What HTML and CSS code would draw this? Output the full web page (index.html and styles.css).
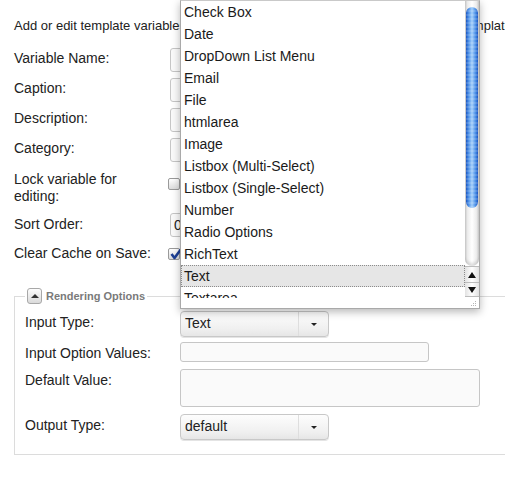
FILE: index.html
```html
<!DOCTYPE html>
<html>
<head>
<meta charset="utf-8">
<link rel="stylesheet" href="styles.css">
</head>
<body>
<div class="page">
  <p class="intro">Add or edit template variables here then associate this variable to any of your templates.</p>

  <div class="row r30">
    <label class="lbl p2">Variable Name:</label>
    <input class="field" type="text">
  </div>
  <div class="row r30">
    <label class="lbl p2">Caption:</label>
    <input class="field" type="text">
  </div>
  <div class="row r30">
    <label class="lbl p2">Description:</label>
    <input class="field" type="text">
  </div>
  <div class="row r30">
    <label class="lbl p2">Category:</label>
    <input class="field" type="text">
  </div>
  <div class="row r45">
    <label class="lbl p3">Lock variable for editing:</label>
    <span class="check mt10"></span>
  </div>
  <div class="row r30">
    <label class="lbl p3">Sort Order:</label>
    <input class="field" type="text" value="0">
  </div>
  <div class="row r30">
    <label class="lbl p2">Clear Cache on Save:</label>
    <span class="check mt5"><svg width="14" height="14" viewBox="0 0 14 14"><path d="M2.5 7 L5.5 11 L12.5 1.5" fill="none" stroke="#1d3f94" stroke-width="2.6" stroke-linejoin="round"/></svg></span>
  </div>

  <fieldset class="group">
    <legend class="legend"><span class="toggle"><span class="tri-up"></span></span><span>Rendering Options</span></legend>
    <div class="frow mb5">
      <label class="lbl p3">Input Type:</label>
      <div class="select"><span class="sel-text">Text</span><span class="sel-btn"><span class="tri-down"></span></span></div>
    </div>
    <div class="frow mb7">
      <label class="lbl p25">Input Option Values:</label>
      <input class="field small" type="text">
    </div>
    <div class="frow mb7">
      <label class="lbl p25">Default Value:</label>
      <textarea class="field area"></textarea>
    </div>
    <div class="frow">
      <label class="lbl p3">Output Type:</label>
      <div class="select"><span class="sel-text">default</span><span class="sel-btn"><span class="tri-down"></span></span></div>
    </div>
  </fieldset>

  <div class="listbox">
    <ul class="items">
      <li>Check Box</li>
      <li>Date</li>
      <li>DropDown List Menu</li>
      <li>Email</li>
      <li>File</li>
      <li>htmlarea</li>
      <li>Image</li>
      <li>Listbox (Multi-Select)</li>
      <li>Listbox (Single-Select)</li>
      <li>Number</li>
      <li>Radio Options</li>
      <li>RichText</li>
      <li class="current">Text</li>
      <li>Textarea</li>
      <li>URL</li>
    </ul>
    <div class="vscroll">
      <div class="track"><div class="thumb"></div></div>
      <div class="sbtn up"><span class="tri-up dark"></span></div>
      <div class="sbtn down"><span class="tri-down dark"></span></div>
      <div class="grip"><svg width="14" height="11" viewBox="0 0 14 11"><g fill="#b5b5b5"><rect x="10" y="4" width="1" height="1"/><rect x="8" y="6" width="1" height="1"/><rect x="10" y="6" width="1" height="1"/><rect x="6" y="8" width="1" height="1"/><rect x="8" y="8" width="1" height="1"/><rect x="10" y="8" width="1" height="1"/></g></svg></div>
    </div>
  </div>
</div>
</body>
</html>
```

FILE: styles.css
```css
html, body {
  margin: 0;
  padding: 0;
  width: 505px;
  height: 481px;
  overflow: hidden;
  background: #fff;
}

body {
  font-family: "Liberation Sans", Arial, Helvetica, sans-serif;
  color: #222;
}

.page {
  position: relative;
  padding: 18px 0 0 14px;
  height: 463px;
}

.intro {
  margin: 0 0 14px 0;
  font-size: 13px;
  line-height: 16px;
  white-space: nowrap;
}

.row {
  display: grid;
  grid-template-columns: 156px 1fr;
  align-items: start;
}

.r30 { height: 30px; }
.r45 { height: 45px; }

.lbl {
  font-size: 14px;
  line-height: 17px;
  max-width: 142px;
}

.p2 { padding-top: 2px; }
.p25 { padding-top: 3px; }
.p3 { padding-top: 3px; }

.field {
  box-sizing: border-box;
  height: 24px;
  width: 300px;
  margin: 0;
  border: 1px solid #c6c6c6;
  border-radius: 3px;
  background: #fafafa;
  font: 14px "Liberation Sans", Arial, sans-serif;
  color: #222;
  padding: 0 3px;
}

.field.small {
  height: 20px;
  width: 249px;
}

.field.area {
  height: 38px;
  width: 300px;
  resize: none;
  display: block;
}

.check {
  box-sizing: border-box;
  position: relative;
  display: block;
  width: 12px;
  height: 12px;
  margin-left: -2px;
  border: 1px solid #9a9a9a;
  border-radius: 2px;
  background: linear-gradient(#ffffff, #dcdcdc);
}

.check svg {
  position: absolute;
  left: 0;
  top: -2px;
}

.mt10 { margin-top: 10px; }
.mt5 { margin-top: 5px; }

.group {
  box-sizing: border-box;
  width: 505px;
  margin: 15px 0 0 0;
  padding: 7px 10px 14px 10px;
  border: 1px solid #dcdcdc;
}

.legend {
  display: flex;
  align-items: center;
  gap: 4px;
  padding: 0 2px;
  font-size: 11px;
  font-weight: bold;
  color: #7a7a7a;
  line-height: 16px;
}

.toggle {
  box-sizing: border-box;
  display: flex;
  align-items: center;
  justify-content: center;
  width: 15px;
  height: 16px;
  border: 1px solid #a8a8a8;
  border-radius: 3px;
  background: linear-gradient(#fdfdfd, #dadada);
}

.tri-up {
  width: 0;
  height: 0;
  border-left: 4px solid transparent;
  border-right: 4px solid transparent;
  border-bottom: 4px solid #333;
}

.tri-down {
  width: 0;
  height: 0;
  border-left: 3px solid transparent;
  border-right: 3px solid transparent;
  border-top: 3px solid #222;
}

.frow {
  display: grid;
  grid-template-columns: 155px 1fr;
  align-items: start;
}

.mb5 { margin-bottom: 5px; }
.mb7 { margin-bottom: 7px; }

.select {
  box-sizing: border-box;
  display: flex;
  width: 149px;
  height: 26px;
  border: 1px solid #c8c8c8;
  border-radius: 4px;
  background: linear-gradient(#fdfdfd, #f0f0f0 70%, #e6e6e6);
  box-shadow: 0 1px 0 #e4e4e4;
  font-size: 14px;
}

.sel-text {
  flex: 1;
  padding-left: 4px;
  line-height: 22px;
}

.sel-btn {
  width: 29px;
  display: flex;
  align-items: center;
  justify-content: center;
  border-left: 1px solid #dedede;
}

.listbox {
  position: absolute;
  left: 180px;
  top: 0;
  box-sizing: border-box;
  width: 300px;
  height: 309px;
  border: 1px solid #a9a9a9;
  border-top-color: #c9c9c9;
  background: #fff;
  box-shadow: 0 3px 8px rgba(0, 0, 0, 0.28);
  display: grid;
  grid-template-columns: 284px 14px;
  grid-template-rows: 297px 10px;
}

.items {
  list-style: none;
  margin: 0;
  padding: 0;
  overflow: hidden;
  grid-column: 1;
  grid-row: 1;
  font-size: 14px;
  line-height: 22px;
  color: #1a1a1a;
}

.items li {
  padding-left: 3px;
  white-space: nowrap;
}

.items li.current {
  background: #e6e6e6;
  outline: 1px dotted #8c8c8c;
  outline-offset: -1px;
}

.vscroll {
  grid-column: 2;
  grid-row: 1 / 3;
  display: flex;
  flex-direction: column;
}

.track {
  height: 259px;
  padding-top: 6px;
  border-radius: 0 0 7px 7px;
  background: linear-gradient(90deg, #cfcfcf 0, #ececec 18%, #ffffff 50%, #ececec 82%, #cfcfcf 100%);
  box-shadow: inset 0 -3px 3px rgba(0, 0, 0, 0.12);
}

.thumb {
  height: 201px;
  margin: 0 1px;
  border-radius: 6px;
  background:
    repeating-linear-gradient(0deg, rgba(255, 255, 255, 0.14) 0 2px, rgba(255, 255, 255, 0) 2px 4px),
    linear-gradient(90deg, #1b55c0 0, #4e92e8 22%, #a5d0fb 50%, #4e92e8 78%, #1b55c0 100%);
}

.sbtn {
  box-sizing: border-box;
  display: flex;
  align-items: center;
  justify-content: center;
  border-top: 1px solid #bcbcbc;
  background: linear-gradient(90deg, #e2e2e2, #ffffff 50%, #e2e2e2);
}

.sbtn.up { height: 16px; }
.sbtn.down { height: 15px; border-bottom: 1px solid #bcbcbc; }

.tri-up.dark {
  border-left-width: 4px;
  border-right-width: 4px;
  border-bottom: 6px solid #111;
}

.tri-down.dark {
  border-left: 4px solid transparent;
  border-right: 4px solid transparent;
  border-top: 6px solid #111;
}

.grip {
  height: 11px;
  display: flex;
}
```
